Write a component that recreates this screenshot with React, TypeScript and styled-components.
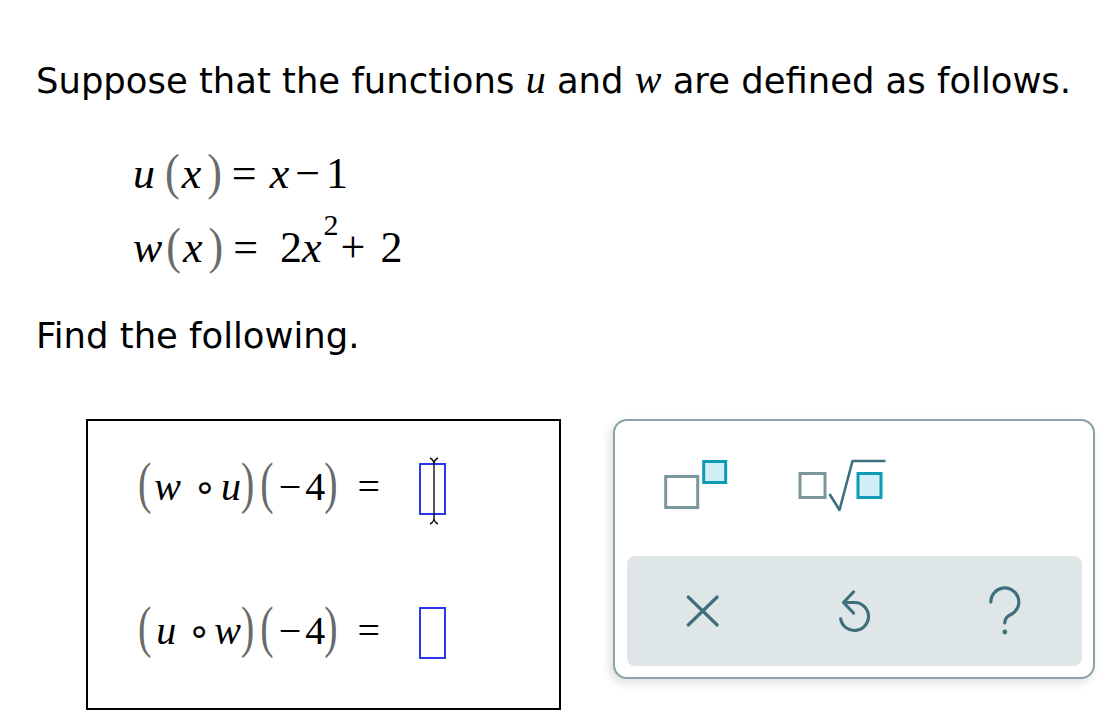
import React from "react";
import styled, { createGlobalStyle } from "styled-components";

const GlobalStyle = createGlobalStyle`
  html, body { margin: 0; padding: 0; background: #fff; }
  body { font-family: "DejaVu Sans", Verdana, sans-serif; color: #000; }
`;

const Page = styled.div`
  box-sizing: border-box;
  width: 1114px;
  padding: 60px 0 0 36px;
`;

const Prompt = styled.p<{ $mt: number }>`
  margin: ${(p) => p.$mt}px 0 0;
  font-size: 35.4px;
  line-height: 40px;
  white-space: nowrap;
`;

const Var = styled.i`
  font-family: "Liberation Serif", "Times New Roman", serif;
  font-size: 40px;
`;

const Defs = styled.div`
  margin: 36px 0 0 97px;
  font-family: "Liberation Serif", "Times New Roman", serif;
  font-size: 44px;
`;

const DefLine = styled.div`
  height: 74px;
  line-height: 74px;
  white-space: nowrap;
`;

const Tok = styled.span<{ $ml?: number; $it?: boolean }>`
  display: inline-block;
  margin-left: ${(p) => p.$ml ?? 0}px;
  font-style: ${(p) => (p.$it ? "italic" : "normal")};
`;

const Sup = styled.sup<{ $ml?: number }>`
  display: inline-block;
  margin-left: ${(p) => p.$ml ?? 0}px;
  font-size: 30px;
  vertical-align: 27px;
  line-height: 0;
`;

const Paren = styled.span<{ $ml?: number; $sy: number }>`
  display: inline-block;
  line-height: 1;
  margin-left: ${(p) => p.$ml ?? 0}px;
  color: #6a6a6a;
  transform: scaleY(${(p) => p.$sy});
  transform-origin: 50% 68%;
`;

const Ring = styled.span<{ $ml?: number }>`
  display: inline-block;
  width: 16px;
  margin-left: ${(p) => p.$ml ?? 0}px;
  text-align: center;
  font-family: "DejaVu Sans", sans-serif;
  font-size: 38px;
`;

const Workspace = styled.div`
  display: flex;
  align-items: flex-start;
  gap: 52px;
  margin: 63px 0 0 50px;
`;

const AnswerBox = styled.div`
  box-sizing: border-box;
  width: 475px;
  height: 291px;
  border: 2px solid #000;
  padding: 42px 0 0 50px;
  display: flex;
  flex-direction: column;
  gap: 92px;
  font-family: "Liberation Serif", "Times New Roman", serif;
  font-size: 40px;
`;

const ExprRow = styled.div`
  display: flex;
  align-items: flex-start;
  height: 52px;
  white-space: nowrap;
`;

const Expr = styled.span`
  line-height: 47px;
`;

const Slot = styled.div<{ $ml: number }>`
  position: relative;
  box-sizing: border-box;
  width: 27px;
  height: 52px;
  margin-left: ${(p) => p.$ml}px;
  border: 2px solid #2b35f2;
`;

const Cursor = styled.svg`
  position: absolute;
  left: 6px;
  top: -8px;
`;

const Palette = styled.div`
  box-sizing: border-box;
  width: 482px;
  height: 260px;
  border: 2px solid #8aa2a9;
  border-radius: 14px;
  background: #fff;
  box-shadow: -3px 4px 10px rgba(0, 0, 0, 0.13);
  padding: 0 11px 11px 12px;
  display: flex;
  flex-direction: column;
`;

const TopRow = styled.div`
  box-sizing: border-box;
  display: grid;
  grid-template-columns: repeat(3, 1fr);
  align-items: center;
  justify-items: center;
  height: 135px;
  padding-bottom: 5px;
`;

const KeyGrid = styled.div`
  display: grid;
  grid-template-columns: repeat(3, 1fr);
  align-items: center;
  justify-items: center;
  height: 110px;
  background: #dfe6e8;
  border-radius: 8px;
`;

const KeyIcon = styled.svg`
  display: block;
  overflow: visible;
`;

const GRAY = "#7b959d";
const TEAL = "#0f9bb5";
const TEAL_FILL = "#d1eff4";
const DARK = "#3e6f7d";

export default function App() {
  return (
    <>
      <GlobalStyle />
      <Page>
        <Prompt $mt={0}>
          Suppose that the functions <Var>u</Var> and <Var>w</Var> are defined as follows.
        </Prompt>
        <Defs>
          <DefLine>
            <Tok $it>u</Tok>
            <Paren $ml={10} $sy={1.15}>(</Paren>
            <Tok $it $ml={2}>x</Tok>
            <Paren $ml={6} $sy={1.15}>)</Paren>
            <Tok $ml={10}>=</Tok>
            <Tok $it $ml={13}>x</Tok>
            <Tok $ml={6}>−</Tok>
            <Tok $ml={6}>1</Tok>
          </DefLine>
          <DefLine>
            <Tok $it>w</Tok>
            <Paren $ml={4} $sy={1.15}>(</Paren>
            <Tok $it $ml={2}>x</Tok>
            <Paren $ml={6} $sy={1.15}>)</Paren>
            <Tok $ml={10}>=</Tok>
            <Tok $ml={22}>2</Tok>
            <Tok $it>x</Tok>
            <Sup $ml={2}>2</Sup>
            <Tok $ml={2}>+</Tok>
            <Tok $ml={15}>2</Tok>
          </DefLine>
        </Defs>
        <Prompt $mt={31}>Find the following.</Prompt>
        <Workspace>
          <AnswerBox>
            <ExprRow>
              <Expr>
                <Paren $sy={1.4}>(</Paren>
                <Tok $it $ml={3}>w</Tok>
                <Ring $ml={12}>∘</Ring>
                <Tok $it $ml={12}>u</Tok>
                <Paren $sy={1.4}>)</Paren>
                <Paren $ml={6} $sy={1.4}>(</Paren>
                <Tok $ml={5}>−</Tok>
                <Tok $ml={4}>4</Tok>
                <Paren $ml={-1} $sy={1.4}>)</Paren>
                <Tok $ml={20}>=</Tok>
              </Expr>
              <Slot $ml={39}>
                <Cursor width="14" height="68" viewBox="0 0 14 68">
                  <path
                    d="M3 1 Q7 3 7 7 Q7 3 11 1 M7 7 V61 Q7 65 3 67 M7 61 Q7 65 11 67"
                    fill="none"
                    stroke="#111"
                    strokeWidth="1.4"
                  />
                </Cursor>
              </Slot>
            </ExprRow>
            <ExprRow>
              <Expr>
                <Paren $sy={1.4}>(</Paren>
                <Tok $it $ml={5}>u</Tok>
                <Ring $ml={11}>∘</Ring>
                <Tok $it $ml={11}>w</Tok>
                <Paren $sy={1.4}>)</Paren>
                <Paren $ml={6} $sy={1.4}>(</Paren>
                <Tok $ml={5}>−</Tok>
                <Tok $ml={4}>4</Tok>
                <Paren $ml={-1} $sy={1.4}>)</Paren>
                <Tok $ml={20}>=</Tok>
              </Expr>
              <Slot $ml={39} />
            </ExprRow>
          </AnswerBox>
          <Palette>
            <TopRow>
              <KeyIcon width="80" height="60" viewBox="0 0 80 60">
                <rect x="2.7" y="20.5" width="32" height="31" fill="#fff" stroke={GRAY} strokeWidth="3" />
                <rect x="40.7" y="5.5" width="22" height="21" fill={TEAL_FILL} stroke={TEAL} strokeWidth="3" />
              </KeyIcon>
              <KeyIcon width="120" height="60" viewBox="0 0 120 60">
                <rect x="6" y="17.5" width="25" height="24" fill="#fff" stroke={GRAY} strokeWidth="3" />
                <path d="M35.5 38 L45.5 54 L58.5 5 H91.5" fill="none" stroke={DARK} strokeWidth="2.6" strokeLinejoin="round" />
                <rect x="64" y="17.5" width="23" height="24" fill={TEAL_FILL} stroke={TEAL} strokeWidth="3" />
              </KeyIcon>
              <span />
            </TopRow>
            <KeyGrid>
              <KeyIcon width="40" height="40" viewBox="0 0 40 40">
                <path d="M5.2 6 L34.2 34 M34.2 6 L5.2 34" stroke={DARK} strokeWidth="3.2" strokeLinecap="round" />
              </KeyIcon>
              <KeyIcon width="40" height="50" viewBox="0 0 40 50">
                <path
                  d="M19.5 6 L9.5 16.5 L19.5 27 M9.5 16.5 H20.5 A14 14 0 1 1 6.7 32.9"
                  fill="none"
                  stroke={DARK}
                  strokeWidth="3.2"
                  strokeLinecap="round"
                  strokeLinejoin="round"
                />
              </KeyIcon>
              <KeyIcon width="40" height="50" viewBox="0 0 40 50">
                <path
                  d="M4.8 16 A14 14 0 1 1 25.8 28.1 Q18.8 31 18.8 37"
                  fill="none"
                  stroke={DARK}
                  strokeWidth="3.2"
                  strokeLinecap="round"
                />
                <circle cx="18.8" cy="46" r="2.4" fill={DARK} />
              </KeyIcon>
            </KeyGrid>
          </Palette>
        </Workspace>
      </Page>
    </>
  );
}
